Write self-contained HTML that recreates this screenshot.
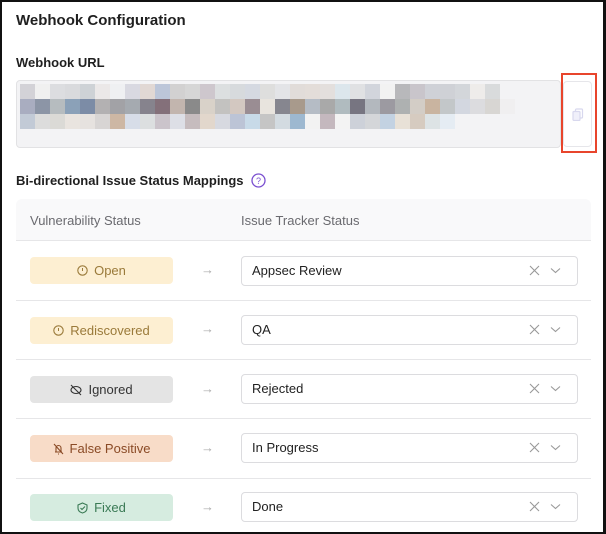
<!DOCTYPE html>
<html><head><meta charset="utf-8"><style>
*{box-sizing:border-box;margin:0;padding:0}
body{width:606px;height:534px;overflow:hidden;background:#fff;font-family:"Liberation Sans",sans-serif;position:relative}
.frame{position:absolute;left:0;top:0;width:606px;height:534px;border:2px solid #111;border-right-width:3px}
.abs{position:absolute}
.t{font-weight:bold;color:#1f1f1f}
.ta{left:16px;top:80px;width:545px;height:68px;background:#f3f3f5;border:1px solid #e2e2e4;border-radius:4px}
.cell{position:absolute;width:15px;height:15px}
.copy{left:563px;top:81px;width:29px;height:66px;border:1px solid #e6e6ea;border-radius:4px;background:#fff}
.red{left:561px;top:73px;width:36px;height:80px;border:2px solid #e8452c}
.hdr{left:16px;top:199px;width:575px;height:42px;background:#f9f9fa;border-radius:6px 6px 0 0;border-bottom:1px solid #e6e6e8}
.hl{color:#6a6a6f;font-size:13px}
.sep{left:16px;width:575px;height:1px;background:#e6e6e8}
.badge{left:30px;width:143px;height:27px;border-radius:4px;display:flex;align-items:center;justify-content:center;font-size:13px;gap:6px}
.arr{left:201px;color:#aaa;font-size:13px}
.sel{left:241px;width:337px;height:30px;border:1px solid #dcdcdf;border-radius:4px;font-size:13px;color:#222;padding-left:10px;line-height:28px}
.ic{position:absolute;right:14px;top:8px}
</style></head><body>
<div class="abs t" style="left:16px;top:12px;font-size:15px">Webhook Configuration</div>
<div class="abs t" style="left:16px;top:55px;font-size:13px">Webhook URL</div>
<div class="abs ta" id="ta"></div>
<div class="abs copy"><svg style="position:absolute;left:8px;top:26px" width="12" height="13" viewBox="0 0 12 13"><rect x="3.5" y="1" width="7" height="9" rx="1" fill="none" stroke="#d8d8ee" stroke-width="1.2"/><rect x="1" y="3.5" width="7" height="9" rx="1" fill="#f0f0fa" stroke="#d8d8ee" stroke-width="1.2"/></svg></div>
<div class="abs red"></div>
<div class="abs t" style="left:16px;top:173px;font-size:13px">Bi-directional Issue Status Mappings</div>
<svg class="abs" style="left:251px;top:173px" width="15" height="15" viewBox="0 0 15 15"><circle cx="7.5" cy="7.5" r="6.5" fill="none" stroke="#7a4fd0" stroke-width="1.3"/><text x="7.5" y="11" font-size="9" text-anchor="middle" fill="#7a4fd0" font-family="Liberation Sans">?</text></svg>
<div class="abs hdr"></div>
<div class="abs hl" style="left:30px;top:213px">Vulnerability Status</div>
<div class="abs hl" style="left:241px;top:213px">Issue Tracker Status</div>

<div class="abs sep" style="top:300px"></div>
<div class="abs sep" style="top:359px"></div>
<div class="abs sep" style="top:418px"></div>
<div class="abs sep" style="top:478px"></div>

<div class="abs badge" style="top:257px;background:#fdefd2;color:#9a7a3a"><svg width="11" height="11"><circle cx="5.5" cy="5.5" r="4.7" fill="none" stroke="#9a7a3a" stroke-width="1.1"/><line x1="5.5" y1="3" x2="5.5" y2="6" stroke="#9a7a3a"/></svg>Open</div>
<div class="abs badge" style="top:317px;background:#fdefd2;color:#9a7a3a"><svg width="11" height="11"><circle cx="5.5" cy="5.5" r="4.7" fill="none" stroke="#9a7a3a" stroke-width="1.1"/><line x1="5.5" y1="3" x2="5.5" y2="6" stroke="#9a7a3a"/></svg>Rediscovered</div>
<div class="abs badge" style="top:376px;background:#e4e4e4;color:#333"><svg width="12" height="12"><ellipse cx="6" cy="6" rx="5" ry="3.5" fill="none" stroke="#333" stroke-width="1.1"/><line x1="1" y1="1" x2="11" y2="11" stroke="#333" stroke-width="1.1"/></svg>Ignored</div>
<div class="abs badge" style="top:435px;background:#f8dcc8;color:#8a4a25"><svg width="11" height="12"><path d="M2 9h7M3 9V5a2.5 2.5 0 015 0v4M5 11h1M1 1l9 10" fill="none" stroke="#8a4a25" stroke-width="1.1"/></svg>False Positive</div>
<div class="abs badge" style="top:494px;background:#d6ece0;color:#3a7a55"><svg width="11" height="12"><path d="M5.5 1L10 3v3c0 3-2.5 4.5-4.5 5C3.5 10.5 1 9 1 6V3z M3.5 6l1.5 1.5 3-3" fill="none" stroke="#3a7a55" stroke-width="1.1"/></svg>Fixed</div>

<div class="abs arr" style="top:262px">→</div>
<div class="abs arr" style="top:321px">→</div>
<div class="abs arr" style="top:381px">→</div>
<div class="abs arr" style="top:440px">→</div>
<div class="abs arr" style="top:499px">→</div>

<div class="abs sel" style="top:256px">Appsec Review<svg class="ic" width="34" height="12"><path d="M1 1l9 9M10 1l-9 9" stroke="#999" stroke-width="1.1"/><path d="M22 3.5l4.5 4 4.5-4" fill="none" stroke="#999" stroke-width="1.1"/></svg></div>
<div class="abs sel" style="top:315px">QA<svg class="ic" width="34" height="12"><path d="M1 1l9 9M10 1l-9 9" stroke="#999" stroke-width="1.1"/><path d="M22 3.5l4.5 4 4.5-4" fill="none" stroke="#999" stroke-width="1.1"/></svg></div>
<div class="abs sel" style="top:374px">Rejected<svg class="ic" width="34" height="12"><path d="M1 1l9 9M10 1l-9 9" stroke="#999" stroke-width="1.1"/><path d="M22 3.5l4.5 4 4.5-4" fill="none" stroke="#999" stroke-width="1.1"/></svg></div>
<div class="abs sel" style="top:433px">In Progress<svg class="ic" width="34" height="12"><path d="M1 1l9 9M10 1l-9 9" stroke="#999" stroke-width="1.1"/><path d="M22 3.5l4.5 4 4.5-4" fill="none" stroke="#999" stroke-width="1.1"/></svg></div>
<div class="abs sel" style="top:492px">Done<svg class="ic" width="34" height="12"><path d="M1 1l9 9M10 1l-9 9" stroke="#999" stroke-width="1.1"/><path d="M22 3.5l4.5 4 4.5-4" fill="none" stroke="#999" stroke-width="1.1"/></svg></div>

<div class="frame"></div>
<script>
var rows=[
["#d3d2d7","#f0f0f0","#dcdde0","#d9dadd","#ced2d6","#ebe8e8","#eff0f2","#d9d9e1","#e1d8d4","#bcc6d9","#d2d1d1","#d6d6d6","#cec7cd","#dcdfe0","#d7dadd","#d5d9e1","#dededd","#e3e4e7","#e1dcd9","#e3ddd9","#e3dfdd","#dce6ec","#e0e1e3","#d2d5dc","#f2f2f2","#b8b8bb","#c9c5cb","#cfd1d7","#cfd1d6","#d3d6da","#eeecea","#d9dbdc"],
["#a9adc0","#8c95a6","#b6bcbf","#8ba1b8","#7c8ca6","#b3b1b2","#a2a2a6","#a5aab0","#86838d","#84707a","#c2b5ae","#8a8a8a","#d9d2c9","#c3c2c0","#d3c8c1","#9a8d93","#e8e4de","#86868f","#a89a8c","#b5bcc5","#a9a9a9","#b0bbbf","#777581","#b3b8be","#9c9aa1","#aeb1b1","#d3cdc6","#c9b4a0","#c3c7c9","#d3d7e0","#dcdcdf","#d8d6d3","#f0eff0"],
["#c2cad6","#dcdcdc","#dbdad6","#e9e4df","#e6e2df","#d8d5d4","#cdb7a4","#d7dde8","#dcdfe0","#cbc4cb","#dddfe6","#c6bcbe","#e2d7cc","#d7d9e0","#bcc4d6","#c8dae8","#c5c5c5","#d3dbe1","#9db8d0","#f2f2f2","#c4b8be","#f3f3f3","#cdd1d9","#d4d6d9","#c3d2e2","#e8e1d7","#d6cbc0","#dde3e5","#e5ecf3"]];
var ta=document.getElementById('ta');
rows.forEach(function(r,i){r.forEach(function(c,j){var d=document.createElement('div');d.className='cell';d.style.left=(3+j*15)+'px';d.style.top=(3+i*15)+'px';d.style.background=c;ta.appendChild(d);});});
</script>
</body></html>
